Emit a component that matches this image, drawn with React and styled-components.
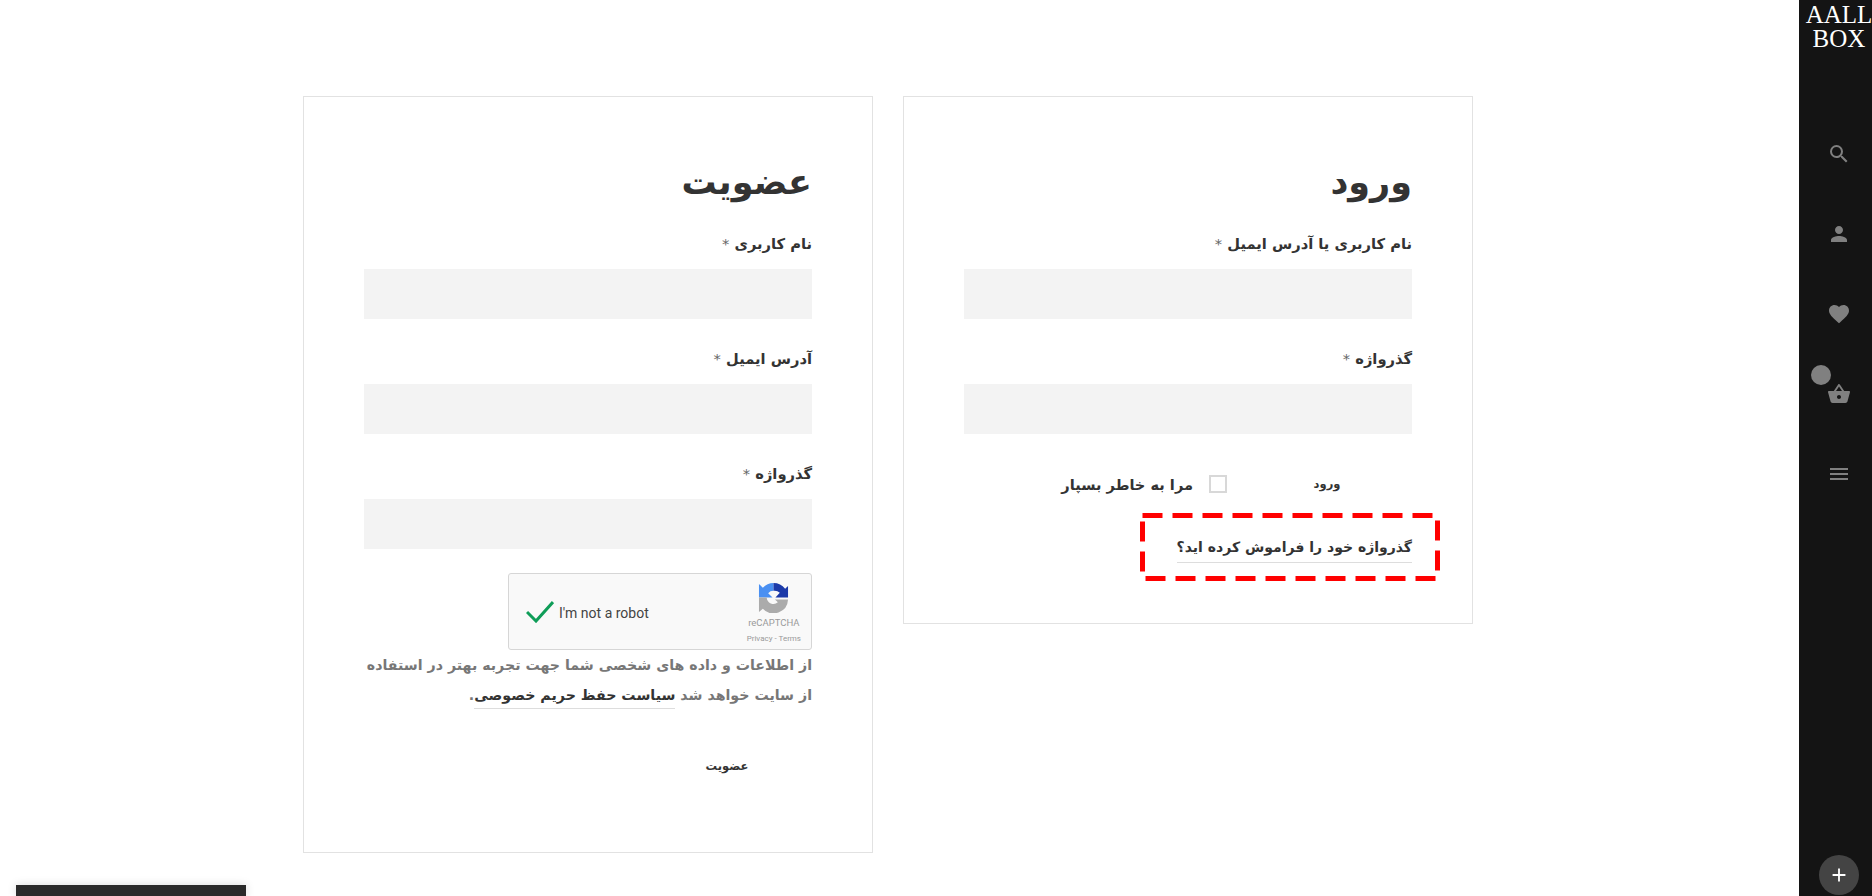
import React from 'react';
import styled, { createGlobalStyle } from 'styled-components';
import { MdSearch, MdPerson, MdFavorite, MdShoppingBasket, MdMenu, MdAdd } from 'react-icons/md';

const GlobalStyle = createGlobalStyle`
  html, body {
    margin: 0;
    height: 100%;
    overflow: hidden;
    background: #fff;
  }
  body {
    font-family: "DejaVu Sans", "Noto Sans", sans-serif;
  }
`;

const Page = styled.div`
  display: flex;
  height: 896px;
  overflow: hidden;
  position: relative;
`;

const Main = styled.main`
  flex: 1;
  display: flex;
  align-items: flex-start;
  gap: 30px;
  padding: 96px 0 0 303px;
`;

const Card = styled.section`
  box-sizing: border-box;
  width: 570px;
  height: ${p => p.$height}px;
  border: 1px solid #e2e2e2;
  padding: 60px 60px 0;
  direction: rtl;
  display: flex;
  flex-direction: column;
`;

const Title = styled.h2`
  margin: 0 0 16px;
  font-size: 35px;
  line-height: 50px;
  font-weight: 700;
  color: #333;
`;

const Field = styled.div`
  margin-bottom: 19px;
`;

const Label = styled.label`
  display: block;
  font-size: 14.7px;
  font-weight: 700;
  line-height: 41px;
  padding-bottom: 5px;
  color: #333;
`;

const Star = styled.span`
  color: #666;
  font-weight: 400;
`;

const Input = styled.div`
  height: 50px;
  background: #f3f3f3;
`;

const ActionRow = styled.div`
  display: flex;
  align-items: center;
  height: 34px;
  margin-top: 14px;
`;

const Button = styled.span`
  font-size: 11.5px;
  font-weight: 700;
  color: #333;
  width: ${p => p.$width}px;
  text-align: center;
`;

const Remember = styled.div`
  display: flex;
  align-items: center;
  gap: 16px;
  margin-right: 15px;
  font-size: 14.6px;
  font-weight: 700;
  color: #333;
`;

const Check = styled.span`
  box-sizing: border-box;
  width: 18px;
  height: 18px;
  border: 2px solid #d8d8d8;
`;

const Highlight = styled.div`
  position: relative;
  box-sizing: border-box;
  width: 300px;
  height: 68px;
  margin: 12px -28px 0 0;
  padding: 23px 28px 0 0;
  align-self: flex-start;
`;

const DashFrame = styled.svg`
  position: absolute;
  inset: 0;
`;

const ForgotLink = styled.a`
  display: inline-block;
  font-size: 14px;
  font-weight: 700;
  line-height: 22px;
  padding-bottom: 4px;
  color: #333;
  border-bottom: 1px solid #ddd;
`;

const Captcha = styled.div`
  box-sizing: border-box;
  direction: ltr;
  align-self: flex-start;
  width: 304px;
  height: 77px;
  margin-top: 5px;
  padding: 0 10px 0 17px;
  background: #f9f9f9;
  border: 1px solid #d6d6d6;
  border-radius: 3px;
  display: flex;
  align-items: center;
  font-family: Roboto, sans-serif;
`;

const CaptchaText = styled.span`
  font-size: 14px;
  color: #444;
  margin: 2px 0 0 5px;
  flex: 1;
`;

const CaptchaBrand = styled.div`
  display: flex;
  flex-direction: column;
  align-items: center;
  color: #999;
  padding-top: 4px;
`;

const BrandName = styled.span`
  font-size: 9.5px;
  line-height: 14px;
  margin-top: 3px;
`;

const BrandLinks = styled.span`
  font-size: 8px;
  line-height: 14px;
  margin-top: 2px;
`;

const Privacy = styled.p`
  margin: 0;
  font-size: 14.2px;
  font-weight: 700;
  line-height: 30px;
  color: #777;
`;

const PolicyLink = styled.a`
  color: #333;
  padding-bottom: 5px;
  border-bottom: 1px solid #ddd;
`;

const SubmitRow = styled.div`
  display: flex;
  height: 20px;
  align-items: center;
  margin-top: 46px;
  padding-right: 53px;
`;

const Sidebar = styled.aside`
  box-sizing: border-box;
  width: 73px;
  height: 896px;
  padding-left: 7px;
  background: #141414;
  display: flex;
  flex-direction: column;
  align-items: center;
  overflow: hidden;
`;

const Logo = styled.div`
  flex: none;
  margin-top: 3px;
  width: 80px;
  font-family: "Liberation Serif", serif;
  font-size: 25px;
  line-height: 24px;
  color: #fff;
  text-align: center;
`;

const IconList = styled.nav`
  display: flex;
  flex-direction: column;
  align-items: center;
  gap: 56px;
  margin-top: 91px;
  color: #808080;
`;

const IconSlot = styled.span`
  position: relative;
  display: flex;
  width: 24px;
  height: 24px;
  font-size: 24px;
`;

const CartBadge = styled.span`
  position: absolute;
  left: -16px;
  top: -17px;
  width: 20px;
  height: 20px;
  border-radius: 50%;
  background: #808080;
`;

const PlusButton = styled.button`
  margin-top: auto;
  margin-bottom: 1px;
  width: 40px;
  height: 40px;
  padding: 0;
  border: 0;
  border-radius: 50%;
  background: #444;
  color: #fff;
  font-size: 22px;
  display: flex;
  align-items: center;
  justify-content: center;
`;

const BottomBar = styled.div`
  position: absolute;
  left: 16px;
  bottom: 0;
  width: 230px;
  height: 11px;
  background: #2a2a2a;
  box-shadow: 0 0 10px rgba(0, 0, 0, 0.15);
`;

function CaptchaLogo() {
  return (
    <svg width="31" height="31" viewBox="0 0 32 32">
      <path d="M16 1a15 15 0 0 0-11 5L1 2v14h14l-4.5-4.5A7 7 0 0 1 16 9z" fill="#4a90f2" />
      <path d="M16 1a15 15 0 0 1 12 6l3-3v12H18l4.5-5A8 8 0 0 0 16 9z" fill="#1c3aa9" />
      <path d="M1 16h8a7 7 0 0 0 11.5 5l-3-3H31a15 15 0 0 1-26 9.5L1 31z" fill="#ababab" />
    </svg>
  );
}

function RequiredLabel({ children }) {
  return (
    <Label>
      {children} <Star>*</Star>
    </Label>
  );
}

export default function App() {
  return (
    <Page>
      <GlobalStyle />
      <Main>
        <Card $height={757}>
          <Title>عضویت</Title>
          <Field>
            <RequiredLabel>نام کاربری</RequiredLabel>
            <Input />
          </Field>
          <Field>
            <RequiredLabel>آدرس ایمیل</RequiredLabel>
            <Input />
          </Field>
          <Field>
            <RequiredLabel>گذرواژه</RequiredLabel>
            <Input />
          </Field>
          <Captcha>
            <svg width="28" height="22" viewBox="0 0 28 22">
              <path d="M1 11l9 9L27 1" fill="none" stroke="#0f9d58" strokeWidth="3" />
            </svg>
            <CaptchaText>I'm not a robot</CaptchaText>
            <CaptchaBrand>
              <CaptchaLogo />
              <BrandName>reCAPTCHA</BrandName>
              <BrandLinks>Privacy - Terms</BrandLinks>
            </CaptchaBrand>
          </Captcha>
          <Privacy>
            از اطلاعات و داده های شخصی شما جهت تجربه بهتر در استفاده از سایت خواهد شد{' '}
            <PolicyLink>سیاست حفظ حریم خصوصی</PolicyLink>.
          </Privacy>
          <SubmitRow>
            <Button $width={64}>عضویت</Button>
          </SubmitRow>
        </Card>
        <Card $height={528}>
          <Title>ورود</Title>
          <Field>
            <RequiredLabel>نام کاربری یا آدرس ایمیل</RequiredLabel>
            <Input />
          </Field>
          <Field>
            <RequiredLabel>گذرواژه</RequiredLabel>
            <Input />
          </Field>
          <ActionRow>
            <Button $width={170}>ورود</Button>
            <Remember>
              <Check />
              مرا به خاطر بسپار
            </Remember>
          </ActionRow>
          <Highlight>
            <DashFrame width="300" height="68" viewBox="0 0 300 68">
              <rect x="2.5" y="2.5" width="295" height="63" fill="none" stroke="#ff0000" strokeWidth="5" strokeDasharray="20 10" />
            </DashFrame>
            <ForgotLink>گذرواژه خود را فراموش کرده اید؟</ForgotLink>
          </Highlight>
        </Card>
      </Main>
      <Sidebar>
        <Logo>AALL<br />BOX</Logo>
        <IconList>
          <IconSlot><MdSearch /></IconSlot>
          <IconSlot><MdPerson /></IconSlot>
          <IconSlot><MdFavorite /></IconSlot>
          <IconSlot>
            <MdShoppingBasket />
            <CartBadge />
          </IconSlot>
          <IconSlot><MdMenu /></IconSlot>
        </IconList>
        <PlusButton><MdAdd /></PlusButton>
      </Sidebar>
      <BottomBar />
    </Page>
  );
}
